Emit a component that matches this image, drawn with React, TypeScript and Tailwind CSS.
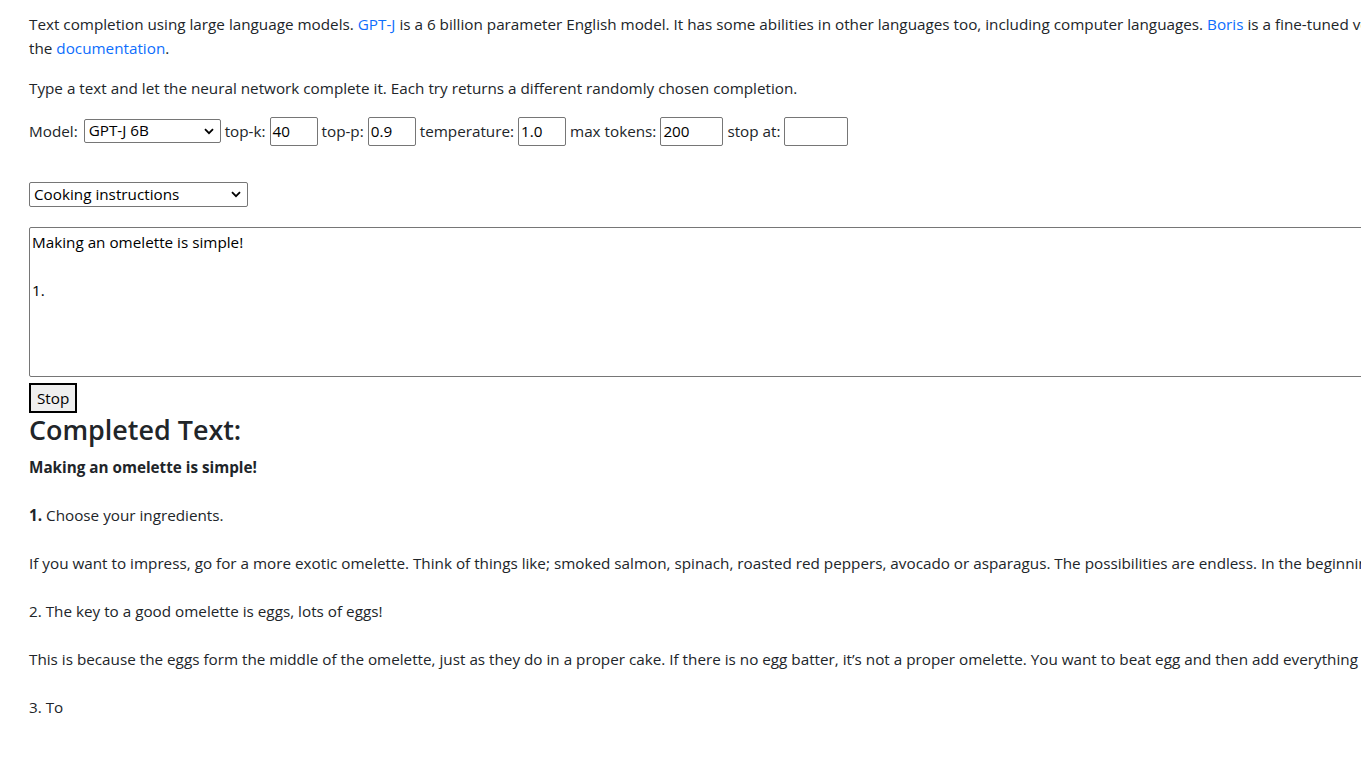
import React from "react";

const F = { fontFamily: '"Segoe UI", "Open Sans", "Liberation Sans", sans-serif' };

function Chevron() {
  return (
    <svg width="10" height="7" viewBox="0 0 10 7" className="shrink-0">
      <path d="M1 1.2 L5 5.2 L9 1.2" fill="none" stroke="#000" strokeWidth="1.8" />
    </svg>
  );
}

function FakeSelect({ w, h, label }: { w: string; h: string; label: string }) {
  return (
    <div className={`${w} ${h} border border-[#767676] rounded-[2px] flex items-center justify-between pl-[4px] pr-[6px] bg-white text-black`}>
      <span className="leading-none">{label}</span>
      <Chevron />
    </div>
  );
}

function Input({ w, v }: { w: string; v: string }) {
  return (
    <div className={`${w} h-[29px] border border-[#767676] rounded-[2px] flex items-center px-[2px] text-black bg-white`}>
      {v}
    </div>
  );
}

export default function App() {
  return (
    <div className="w-[1361px] h-[759px] overflow-hidden bg-white text-[#212529] text-[15.25px] leading-[24px]" style={F}>
      <div className="w-[1700px] pl-[29px] pt-[12px]">
        <p className="whitespace-nowrap">
          Text completion using large language models. <a className="text-[#0d6efd]">GPT-J</a> is a 6 billion parameter English model. It has some abilities in other languages too, including computer languages. <a className="text-[#0d6efd]">Boris</a> is a fine-tuned version of GPT-J for French. For more information, see
          <br />
          the <a className="text-[#0d6efd]">documentation</a>.
        </p>
        <p className="mt-[16px]">Type a text and let the neural network complete it. Each try returns a different randomly chosen completion.</p>
        <div className="mt-[16px] flex items-center gap-[4px] h-[30px]">
          <span className="mr-[2px]">Model:</span>
          <FakeSelect w="w-[137px]" h="h-[24px]" label="GPT-J 6B" />
          <span>top-k:</span>
          <Input w="w-[48px]" v="40" />
          <span>top-p:</span>
          <Input w="w-[48px]" v="0.9" />
          <span>temperature:</span>
          <Input w="w-[48px]" v="1.0" />
          <span>max tokens:</span>
          <Input w="w-[63px]" v="200" />
          <span>stop at:</span>
          <Input w="w-[64px]" v="" />
        </div>
        <div className="mt-[36px]">
          <FakeSelect w="w-[219px]" h="h-[25px]" label="Cooking instructions" />
        </div>
        <div className="mt-[20px] w-[1500px] h-[150px] border border-[#767676] rounded-[2px] px-[2px] pt-[2px] text-black whitespace-pre">
          {"Making an omelette is simple!\n\n1."}
        </div>
        <button className="mt-[6px] block w-[48px] h-[30px] border-2 border-black bg-[#efefef] text-black px-[6px]">Stop</button>
        <h3 className="text-[26.9px] leading-[33.6px] font-semibold mb-[8px]">Completed Text:</h3>
        <div className="whitespace-nowrap">
          <p className="font-bold">Making an omelette is simple!</p>
          <p className="mt-[24px]"><b>1.</b> Choose your ingredients.</p>
          <p className="mt-[24px]">If you want to impress, go for a more exotic omelette. Think of things like; smoked salmon, spinach, roasted red peppers, avocado or asparagus. The possibilities are endless. In the beginning, keep it simple.</p>
          <p className="mt-[24px]">2. The key to a good omelette is eggs, lots of eggs!</p>
          <p className="mt-[24px]">This is because the eggs form the middle of the omelette, just as they do in a proper cake. If there is no egg batter, it’s not a proper omelette. You want to beat egg and then add everything else.</p>
          <p className="mt-[24px]">3. To</p>
        </div>
      </div>
    </div>
  );
}
